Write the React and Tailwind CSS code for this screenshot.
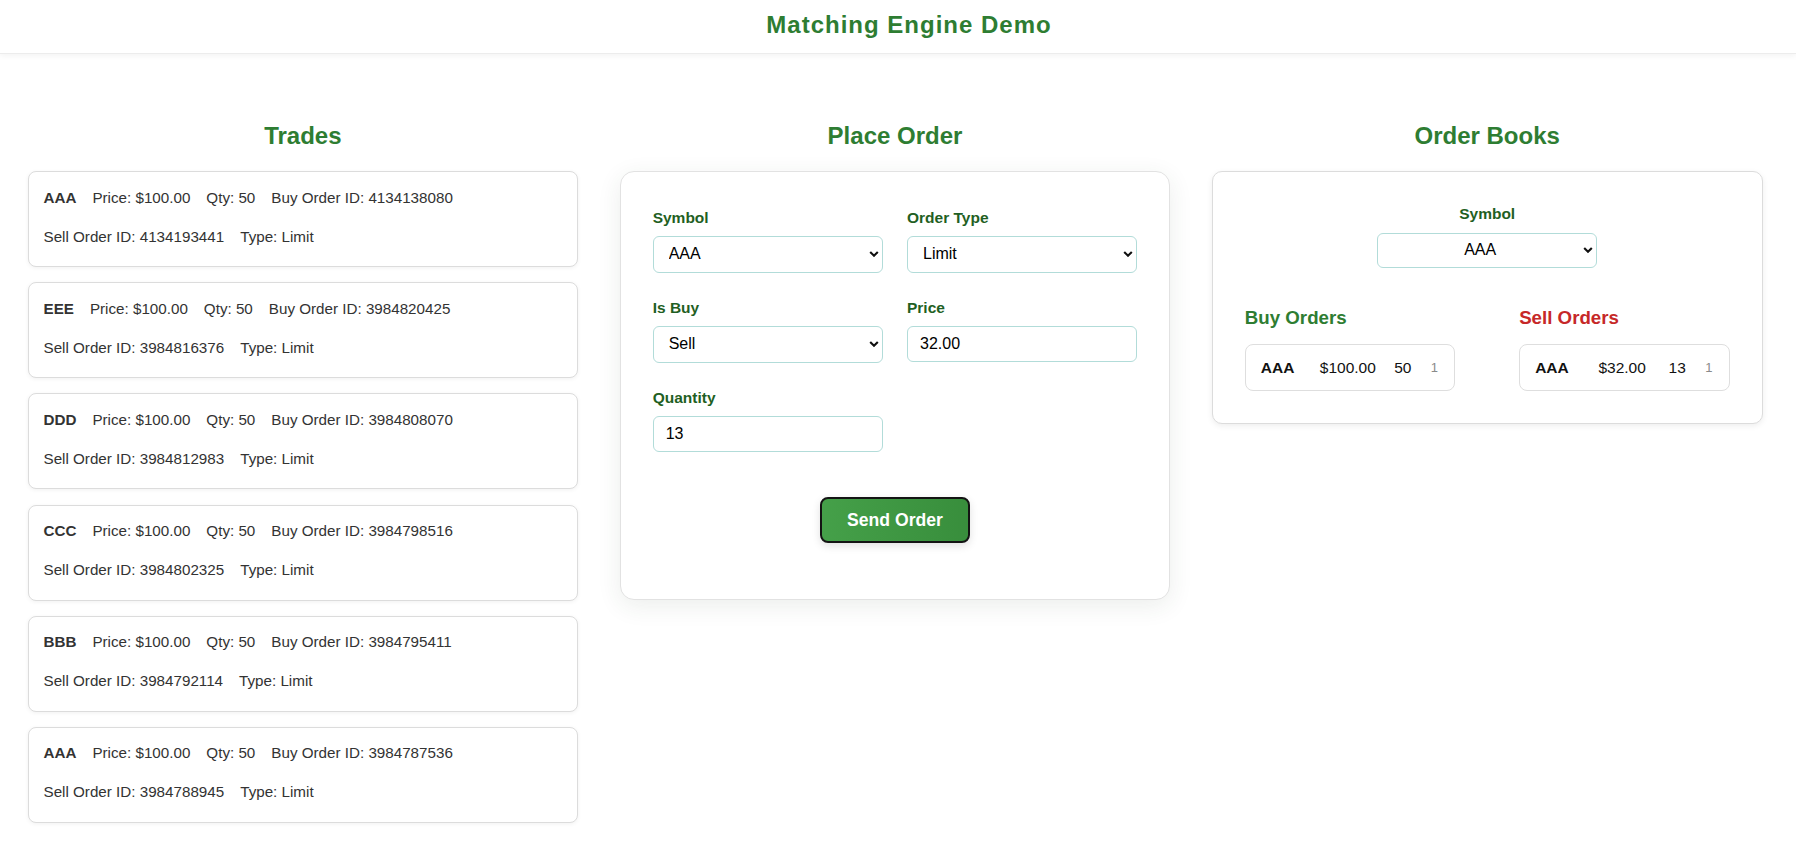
import React from "react";

const trades = [
  { sym: "AAA", buy: "4134138080", sell: "4134193441" },
  { sym: "EEE", buy: "3984820425", sell: "3984816376" },
  { sym: "DDD", buy: "3984808070", sell: "3984812983" },
  { sym: "CCC", buy: "3984798516", sell: "3984802325" },
  { sym: "BBB", buy: "3984795411", sell: "3984792114" },
  { sym: "AAA", buy: "3984787536", sell: "3984788945" },
];

function Chevron() {
  return (
    <svg
      className="pointer-events-none absolute right-[4px] top-1/2 -translate-y-1/2"
      width="10"
      height="7"
      viewBox="0 0 10 7"
      fill="none"
    >
      <path d="M1.2 1.4 L5 5.2 L8.8 1.4" stroke="#111" strokeWidth="2.1" />
    </svg>
  );
}

function SelectBox({ value, center, className }) {
  return (
    <div className={"relative " + (className || "")}>
      <select
        defaultValue={value}
        className={
          "appearance-none w-full h-full border border-[#b2dcd9] rounded-md bg-white text-black text-base outline-none " +
          (center ? "text-center [text-align-last:center] pl-3 pr-[26px]" : "pl-[15px] pr-6")
        }
      >
        <option>{value}</option>
      </select>
      <Chevron />
    </div>
  );
}

function Field({ label, children }) {
  return (
    <div>
      <div className="text-[15.5px] font-bold leading-5 text-[#1f5f23] mb-[8.5px]">{label}</div>
      {children}
    </div>
  );
}

function TextInput({ value }) {
  return (
    <input
      defaultValue={value}
      className="w-full h-[36px] border border-[#b2dcd9] rounded-md px-3 text-base text-black outline-none"
    />
  );
}

function OrderRow({ sym, price, qty, count }) {
  return (
    <div className="h-[47px] border border-[#dedede] rounded-lg flex items-center px-[15px] text-[15.5px] text-[#111]">
      <span className="w-[46px] font-bold">{sym}</span>
      <span className="w-[82px] text-center">{price}</span>
      <span className="w-[28px] text-center">{qty}</span>
      <span className="ml-[14px] text-[13px] text-[#8a8a8a]">{count}</span>
    </div>
  );
}

export default function App() {
  return (
    <div className="min-h-screen bg-white font-['Liberation_Sans',Arial,sans-serif]">
      {/* header */}
      <header className="h-[54px] pt-[11px] pl-[22px] text-center bg-white border-b border-[#ececec] shadow-[0_2px_6px_rgba(0,0,0,0.05)]">
        <h1 className="text-[24px] leading-[28px] font-bold tracking-[1px] text-[#2e7d32]">
          Matching Engine Demo
        </h1>
      </header>

      <main className="grid grid-cols-3 gap-x-[41.5px] pl-[27.5px] pr-[33.5px] pt-[67.5px]">
        {/* trades */}
        <section>
          <h2 className="text-[24px] leading-[28px] font-bold text-center text-[#2e7d32] mb-[21.5px]">Trades</h2>
          <div className="flex flex-col gap-[15.2px]">
            {trades.map((t, i) => (
              <div
                key={i}
                className="h-[96px] border border-[#dcdcdc] rounded-lg bg-white shadow-[0_1px_4px_rgba(0,0,0,0.06)] px-[15px] pt-[15.5px] flex flex-col gap-[19px] text-[15.2px] leading-5 text-[#333]"
              >
                <div className="flex gap-4">
                  <span className="font-bold">{t.sym}</span>
                  <span>Price: $100.00</span>
                  <span>Qty: 50</span>
                  <span>Buy Order ID: {t.buy}</span>
                </div>
                <div className="flex gap-4">
                  <span>Sell Order ID: {t.sell}</span>
                  <span>Type: Limit</span>
                </div>
              </div>
            ))}
          </div>
        </section>

        {/* place order */}
        <section>
          <h2 className="text-[24px] leading-[28px] font-bold text-center text-[#2e7d32] mb-[21.5px]">Place Order</h2>
          <div className="border border-[#e2e2e2] rounded-[14px] bg-white shadow-[0_6px_24px_rgba(40,70,40,0.09)] px-8 pt-[35.5px] pb-[56px]">
            <div className="grid grid-cols-2 gap-x-6 gap-y-[25px]">
              <Field label="Symbol">
                <SelectBox value="AAA" className="h-[36.5px]" />
              </Field>
              <Field label="Order Type">
                <SelectBox value="Limit" className="h-[36.5px]" />
              </Field>
              <Field label="Is Buy">
                <SelectBox value="Sell" className="h-[36.5px]" />
              </Field>
              <Field label="Price">
                <TextInput value="32.00" />
              </Field>
              <Field label="Quantity">
                <TextInput value="13" />
              </Field>
            </div>
            <div className="flex justify-center mt-[45px]">
              <button className="h-[46px] px-[25.5px] rounded-lg border-2 border-[#141414] bg-gradient-to-r from-[#45a049] to-[#388e3c] text-white font-bold text-[17.6px] shadow-[0_3px_8px_rgba(0,0,0,0.12)]">
                Send Order
              </button>
            </div>
          </div>
        </section>

        {/* order books */}
        <section>
          <h2 className="text-[24px] leading-[28px] font-bold text-center text-[#2e7d32] mb-[21.5px]">Order Books</h2>
          <div className="border border-[#dcdcdc] rounded-[10px] bg-white shadow-[0_2px_6px_rgba(0,0,0,0.07)] px-8 pt-8 pb-8">
            <div className="text-center text-[15.5px] font-bold leading-5 text-[#1f5f23]">Symbol</div>
            <SelectBox value="AAA" center className="w-[220px] h-[35.5px] mx-auto mt-[8.5px]" />
            <div className="grid grid-cols-2 gap-x-16 mt-[38.5px]">
              <div>
                <h3 className="text-[18.7px] leading-[22px] font-bold text-[#2e7d32] mb-[15.6px]">Buy Orders</h3>
                <OrderRow sym="AAA" price="$100.00" qty="50" count="1" />
              </div>
              <div>
                <h3 className="text-[18.7px] leading-[22px] font-bold text-[#c62828] mb-[15.6px]">Sell Orders</h3>
                <OrderRow sym="AAA" price="$32.00" qty="13" count="1" />
              </div>
            </div>
          </div>
        </section>
      </main>
    </div>
  );
}
